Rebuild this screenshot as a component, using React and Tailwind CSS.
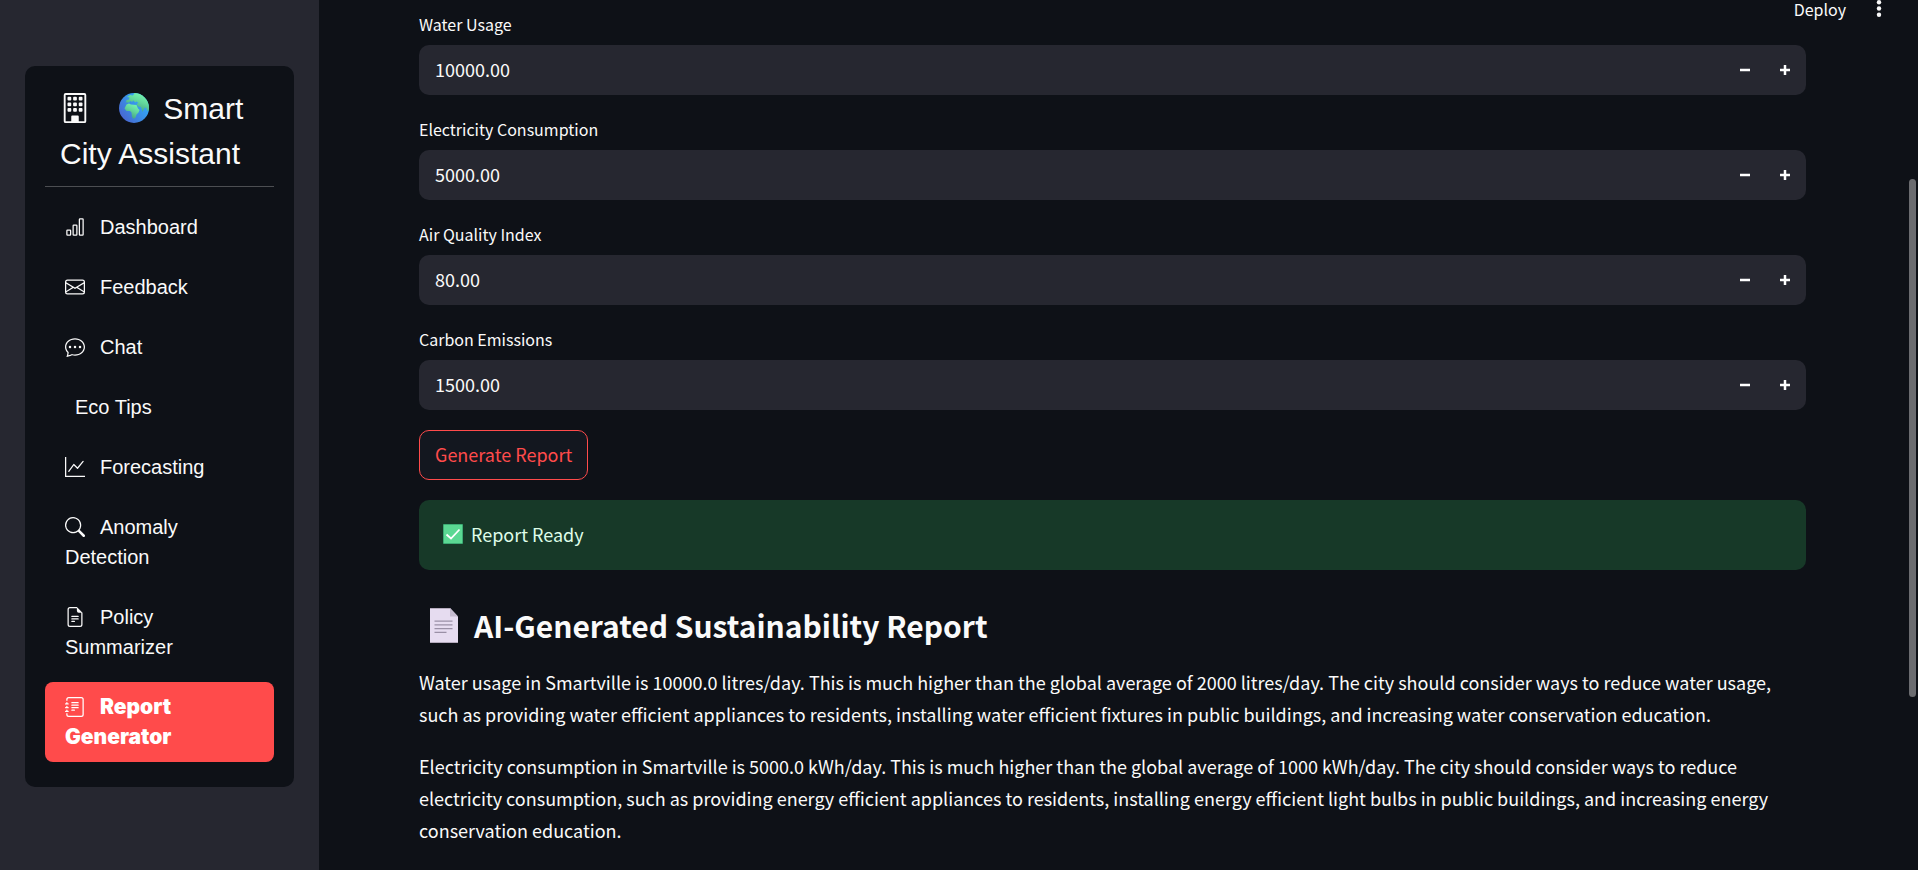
import { useId, useState } from "react";
import {
  BsBarChart,
  BsBuilding,
  BsChatDots,
  BsEnvelope,
  BsFileEarmarkText,
  BsGraphUp,
  BsJournalText,
  BsSearch,
} from "react-icons/bs";

const NAV_ITEMS = [
  { label: "Dashboard", icon: BsBarChart },
  { label: "Feedback", icon: BsEnvelope },
  { label: "Chat", icon: BsChatDots },
  { label: "Eco Tips", icon: null },
  { label: "Forecasting", icon: BsGraphUp },
  { label: "Anomaly Detection", icon: BsSearch },
  { label: "Policy Summarizer", icon: BsFileEarmarkText },
  { label: "Report Generator", icon: BsJournalText, active: true },
];

const FIELDS = [
  { label: "Water Usage", value: 10000 },
  { label: "Electricity Consumption", value: 5000 },
  { label: "Air Quality Index", value: 80 },
  { label: "Carbon Emissions", value: 1500 },
];

const PARAGRAPHS = [
  "Water usage in Smartville is 10000.0 litres/day. This is much higher than the global average of 2000 litres/day. The city should consider ways to reduce water usage, such as providing water efficient appliances to residents, installing water efficient fixtures in public buildings, and increasing water conservation education.",
  "Electricity consumption in Smartville is 5000.0 kWh/day. This is much higher than the global average of 1000 kWh/day. The city should consider ways to reduce electricity consumption, such as providing energy efficient appliances to residents, installing energy efficient light bulbs in public buildings, and increasing energy conservation education.",
];

function GlobeIcon() {
  return (
    <svg viewBox="0 0 30 30" className="mr-[6px] ml-[25px] inline-block size-[30px] align-[-4px]" aria-hidden="true">
      <defs>
        <linearGradient id="ocean" x1="1" y1="0.2" x2="0.1" y2="0.9">
          <stop offset="0" stopColor="#2fb4ff" />
          <stop offset="0.5" stopColor="#3a8fe6" />
          <stop offset="1" stopColor="#4a63cf" />
        </linearGradient>
        <linearGradient id="land" x1="0.9" y1="0" x2="0.4" y2="1">
          <stop offset="0" stopColor="#7dffb4" />
          <stop offset="0.5" stopColor="#62d69c" />
          <stop offset="1" stopColor="#3f9a80" />
        </linearGradient>
        <clipPath id="disc">
          <circle cx="15" cy="15" r="15" />
        </clipPath>
      </defs>
      <circle cx="15" cy="15" r="15" fill="url(#ocean)" />
      <g clipPath="url(#disc)" fill="url(#land)">
        <path d="M8 4 11 2 14 2.500 15.500 0H24L31 8V17L28.500 18 27 14.500 25.500 15 23.500 19 22 14 19 13.500 17.500 11 19.500 10 17.500 8.500 16 9.500 14.500 7.500 13 9 11.500 8 10 9.500 7 9.500 7.500 7 10 6.500 10.500 4.500Z" />
        <path d="M7.500 11.500 10 10.500 12 11.500 17.500 12 19 15.500 20.500 17 19.500 19.500 17.500 21.500 16.500 24.500 14.500 26 13 24 12.500 19.500 11 18 7.500 18 5.500 15.500Z" />
      </g>
    </svg>
  );
}

function PageIcon() {
  return (
    <svg viewBox="0 0 28 35" className="h-[35px] w-7" aria-hidden="true">
      <path d="M0 0H20L28 8.500V35H0Z" fill="#e6dcf0" />
      <path d="M0 0H20V.9H0ZM0 34H28V35H0Z" fill="#b5abbd" />
      <path d="M20 0 28 8.500H20Z" fill="#c6bcd0" />
      <path d="M4.500 13.200H22.500M4.500 16.900H22.500M4.500 20.600H22.500M4.500 24.300H16.500" stroke="#9a90a6" strokeWidth="1.200" />
    </svg>
  );
}

function CheckIcon() {
  return (
    <svg viewBox="0 0 20 20" className="size-5" aria-hidden="true">
      <rect width="20" height="20" rx="1" fill="#3dab74" />
      <rect x="1" y="1" width="18" height="18" fill="#5bd893" />
      <path d="M3.500 10.500 8 14.500 16.500 5.500" fill="none" stroke="#fff" strokeWidth="1.800" />
    </svg>
  );
}

function Sidebar() {
  return (
    <aside className="w-[319px] shrink-0 bg-[#262730] px-[25px] pt-[66px] font-['Liberation_Sans',Arial,sans-serif] text-[#fafafa]">
      <div className="rounded-[10px] bg-[#0e1117] px-5 pt-5 pb-[25px]">
        <h1 className="border-b border-[#4c4e52] px-[15px] pb-[10px] text-[30px] leading-[45px]">
          <BsBuilding className="mr-1 inline-block size-[30px] align-[-4px]" aria-hidden="true" />
          <GlobeIcon /> Smart City Assistant
        </h1>
        <nav className="flex flex-col gap-[10px] pt-[15px] text-xl leading-[30px]">
          {NAV_ITEMS.map(({ label, icon: Icon, active }) => (
            <a
              key={label}
              href="#"
              aria-current={active ? "page" : undefined}
              className={
                active
                  ? "rounded-lg bg-[#ff4b4b] px-5 py-[10px] font-['Inter',sans-serif] text-[21px] font-black text-white"
                  : "rounded-lg px-5 py-[10px]"
              }
            >
              {Icon ? (
                <Icon className="mr-[15px] inline-block size-5 align-[-3px]" aria-hidden="true" />
              ) : (
                <span className="mr-[10px]" />
              )}
              {label}
            </a>
          ))}
        </nav>
      </div>
    </aside>
  );
}

function NumberField({ label, initial }) {
  const id = useId();
  const [value, setValue] = useState(initial.toFixed(2));
  const step = (delta) => setValue((Number(value) + delta).toFixed(2));
  const buttonClass = "flex w-10 items-center justify-center text-white";
  return (
    <div className="flex flex-col gap-[7px]">
      <label htmlFor={id} className="text-base leading-7">
        {label}
      </label>
      <div className="flex h-[50px] overflow-hidden rounded-[10px] bg-[#262730] pr-px">
        <input
          id={id}
          value={value}
          onChange={(event) => setValue(event.target.value)}
          className="min-w-0 flex-1 bg-transparent px-4 pb-[2px] text-lg outline-none"
        />
        <button type="button" aria-label={`Decrease ${label}`} onClick={() => step(-0.01)} className={buttonClass}>
          <svg viewBox="0 0 10 10" className="size-[10px]" aria-hidden="true">
            <path d="M0 5H10" stroke="currentColor" strokeWidth="2.500" />
          </svg>
        </button>
        <button type="button" aria-label={`Increase ${label}`} onClick={() => step(0.01)} className={buttonClass}>
          <svg viewBox="0 0 10 10" className="size-[10px]" aria-hidden="true">
            <path d="M0 5H10M5 0V10" stroke="currentColor" strokeWidth="2.500" />
          </svg>
        </button>
      </div>
    </div>
  );
}

export default function App() {
  return (
    <div className="flex h-screen overflow-hidden bg-[#0e1117] font-['Noto_Sans_CJK_SC','Source_Sans_3',sans-serif] text-[#fafafa]">
      <Sidebar />
      <div className="relative min-w-0 flex-1">
        <main className="pt-[10px] pr-28 pl-[100px]">
          <form className="flex flex-col gap-5" onSubmit={(event) => event.preventDefault()}>
            {FIELDS.map((field) => (
              <NumberField key={field.label} label={field.label} initial={field.value} />
            ))}
            <button
              type="submit"
              className="h-[50px] self-start rounded-[10px] border border-[#ff4b4b] bg-[#13171f] px-[15px] pb-[2px] text-lg text-[#ff4b4b]"
            >
              Generate Report
            </button>
          </form>
          <div role="status" className="mt-5 flex h-[70px] items-center gap-2 rounded-[10px] bg-[#173928] px-6 pb-[2px] text-lg text-[#dffde9]">
            <CheckIcon />
            <span>Report Ready</span>
          </div>
          <h2 className="mt-[34px] flex items-center gap-4 pl-[11px] text-[30px] leading-[42px] font-bold">
            <PageIcon />
            AI-Generated Sustainability Report
          </h2>
          <div className="mt-5 flex flex-col gap-5 text-lg leading-8">
            {PARAGRAPHS.map((text) => (
              <p key={text}>{text}</p>
            ))}
          </div>
        </main>
        <div className="absolute top-0 right-9 flex items-start gap-[30px]">
          <button type="button" className="text-base leading-[18px]">
            Deploy
          </button>
          <button type="button" aria-label="Menu" className="w-[6px]">
            <svg viewBox="0 0 6 18" className="h-[18px] w-[6px]" fill="currentColor" aria-hidden="true">
              <circle cx="3" cy="2.200" r="2.200" />
              <circle cx="3" cy="8.500" r="2.200" />
              <circle cx="3" cy="14.800" r="2.200" />
            </svg>
          </button>
        </div>
        <div className="absolute top-[179px] right-[2px] h-[518px] w-[7px] rounded-full bg-[#6b6c70]" />
      </div>
    </div>
  );
}
